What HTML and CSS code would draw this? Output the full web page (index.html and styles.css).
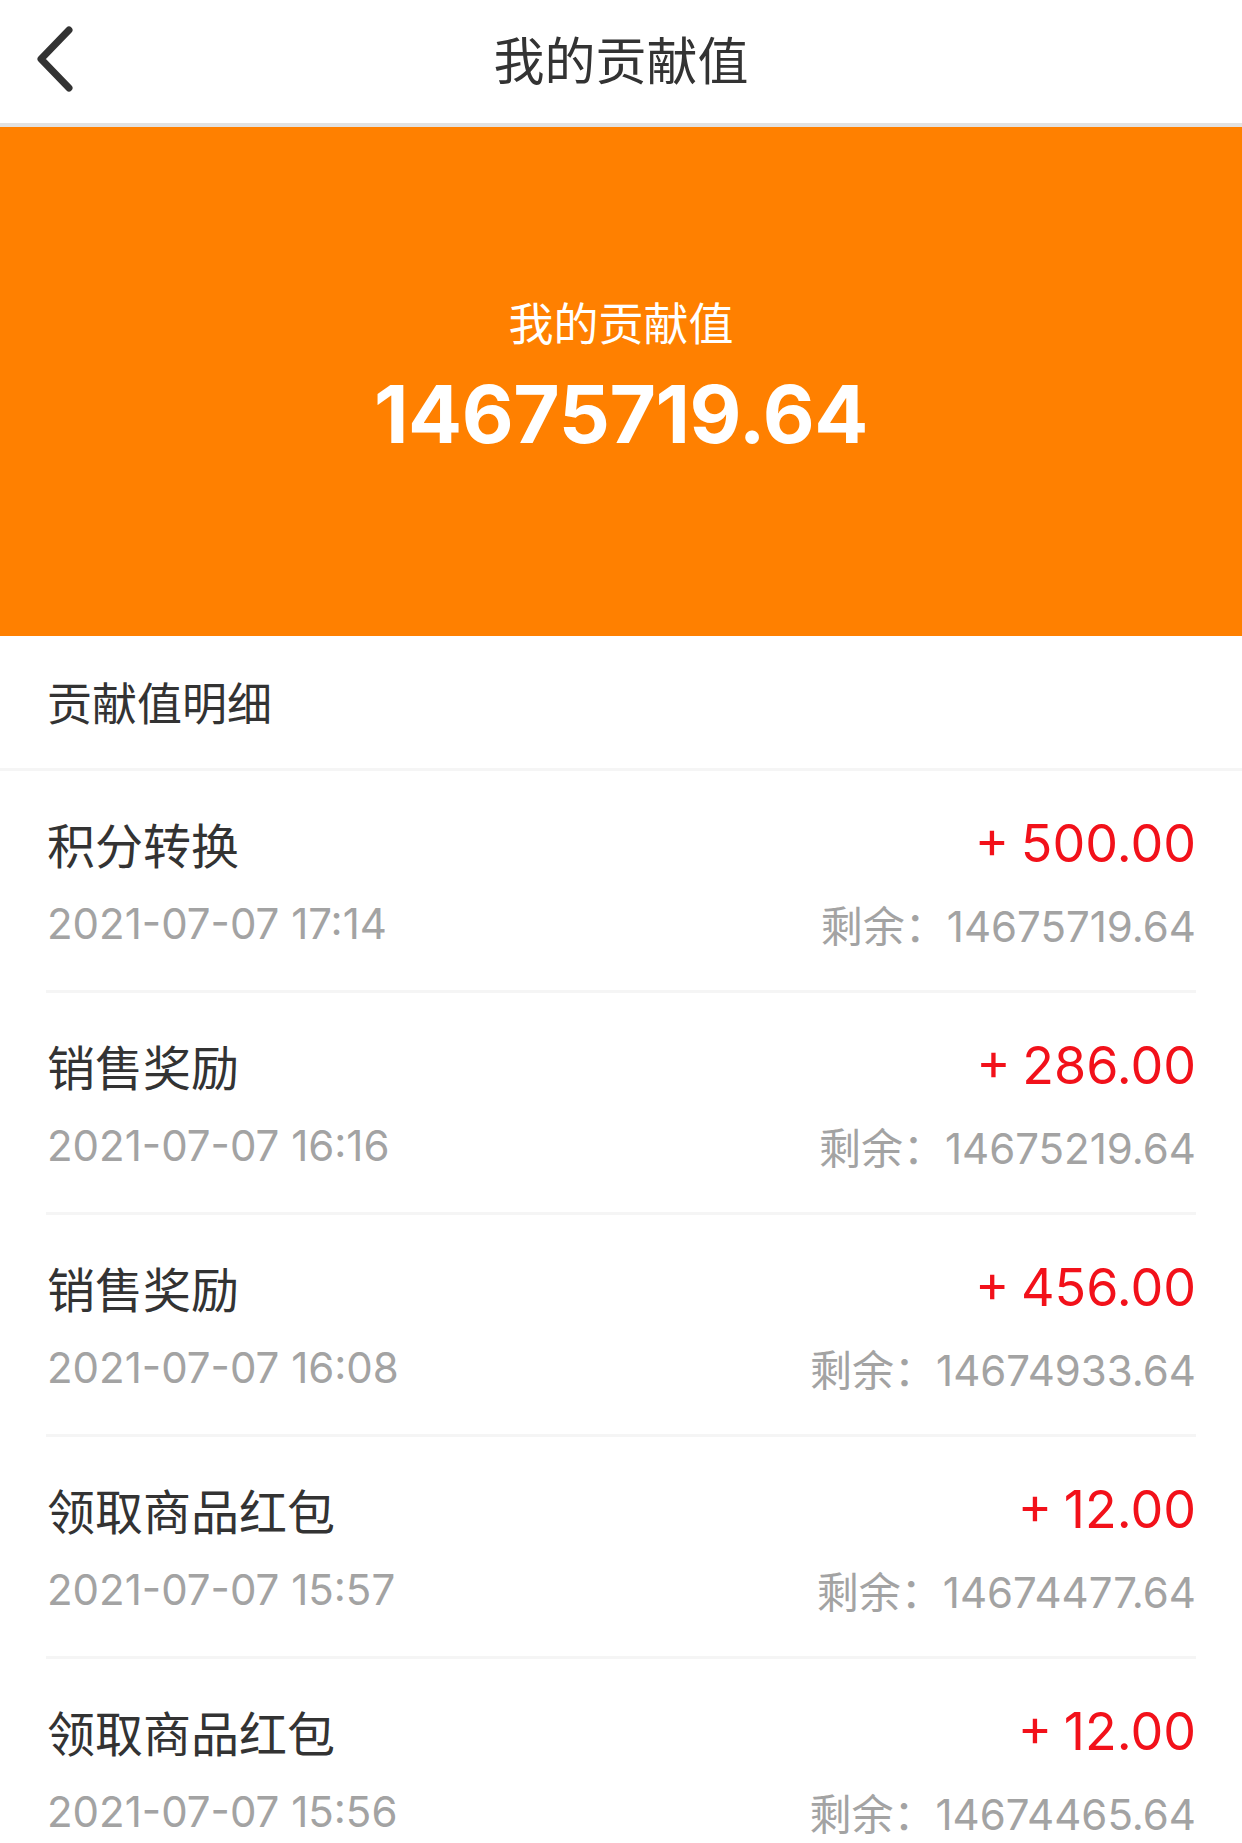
FILE: index.html
```html
<!DOCTYPE html>
<html>
<head>
	<meta charset="utf-8">
	<title>我的贡献值</title>
	<link rel="stylesheet" href="styles.css">
</head>
<body>

<div class="navbar">
  <a href="#" class="back">
    <svg width="48" height="76" viewBox="0 0 48 76">
      <polyline points="35,9 7,38 35,67" fill="none" stroke="#333" stroke-width="7" stroke-linecap="round" stroke-linejoin="round"/>
    </svg>
  </a>
  <div class="navbar-title">我的贡献值</div>
</div>

<div class="banner">
  <div class="banner-label">我的贡献值</div>
  <div class="banner-value">14675719.64</div>
</div>

<div class="section-title">贡献值明细</div>

<ul class="records">
  <li class="record">
    <div class="record-top">
      <span class="record-name">积分转换</span>
      <span class="record-amount">+ 500.00</span>
    </div>
    <div class="record-bottom">
      <span class="record-date">2021-07-07 17:14</span>
      <span class="record-rest">剩余：14675719.64</span>
    </div>
  </li>
  <li class="record">
    <div class="record-top">
      <span class="record-name">销售奖励</span>
      <span class="record-amount">+ 286.00</span>
    </div>
    <div class="record-bottom">
      <span class="record-date">2021-07-07 16:16</span>
      <span class="record-rest">剩余：14675219.64</span>
    </div>
  </li>
  <li class="record">
    <div class="record-top">
      <span class="record-name">销售奖励</span>
      <span class="record-amount">+ 456.00</span>
    </div>
    <div class="record-bottom">
      <span class="record-date">2021-07-07 16:08</span>
      <span class="record-rest">剩余：14674933.64</span>
    </div>
  </li>
  <li class="record">
    <div class="record-top">
      <span class="record-name">领取商品红包</span>
      <span class="record-amount">+ 12.00</span>
    </div>
    <div class="record-bottom">
      <span class="record-date">2021-07-07 15:57</span>
      <span class="record-rest">剩余：14674477.64</span>
    </div>
  </li>
  <li class="record">
    <div class="record-top">
      <span class="record-name">领取商品红包</span>
      <span class="record-amount">+ 12.00</span>
    </div>
    <div class="record-bottom">
      <span class="record-date">2021-07-07 15:56</span>
      <span class="record-rest">剩余：14674465.64</span>
    </div>
  </li>
</ul>

</body>
</html>
```

FILE: styles.css
```css
body {
    margin: 0;
    background: #fff;
    color: #333;
    font-family: Inter, "Noto Sans CJK SC", sans-serif;
}

.navbar {
    position: relative;
    height: 123px;
    display: flex;
    align-items: center;
    justify-content: center;
    border-bottom: 4px solid #e2e2e2;
}

.back {
    position: absolute;
    left: 34px;
    top: 21px;
    display: block;
}

.back svg {
    display: block;
}

.navbar-title {
    font-size: 51px;
    line-height: 60px;
    color: #333;
}

.banner {
    height: 509px;
    box-sizing: border-box;
    padding-top: 170px;
    background: #ff8000;
    color: #fff;
    text-align: center;
}

.banner-label {
    font-size: 45px;
    line-height: 56px;
}

.banner-value {
    margin-top: 13px;
    font-size: 80px;
    line-height: 96px;
    font-weight: 700;
    letter-spacing: -0.4px;
}

.section-title {
    padding: 39px 47px 33px;
    font-size: 45px;
    line-height: 60px;
    color: #333;
    border-bottom: 3px solid #f5f5f5;
}

.records {
    margin: 0;
    padding: 0;
    list-style: none;
}

.record {
    margin: 0 46px;
    padding: 42px 0 42px 1px;
    border-bottom: 3px solid #f5f5f5;
}

.record-top,
.record-bottom {
    display: flex;
    justify-content: space-between;
    align-items: center;
}

.record-top {
    height: 60px;
}

.record-bottom {
    height: 50px;
    margin-top: 25px;
}

.record-name {
    font-size: 48px;
    color: #333;
}

.record-amount {
    font-size: 52px;
    word-spacing: -3px;
    color: #f2111a;
}

.record-date,
.record-rest {
    font-size: 42px;
    color: #a3a3a3;
}
```
